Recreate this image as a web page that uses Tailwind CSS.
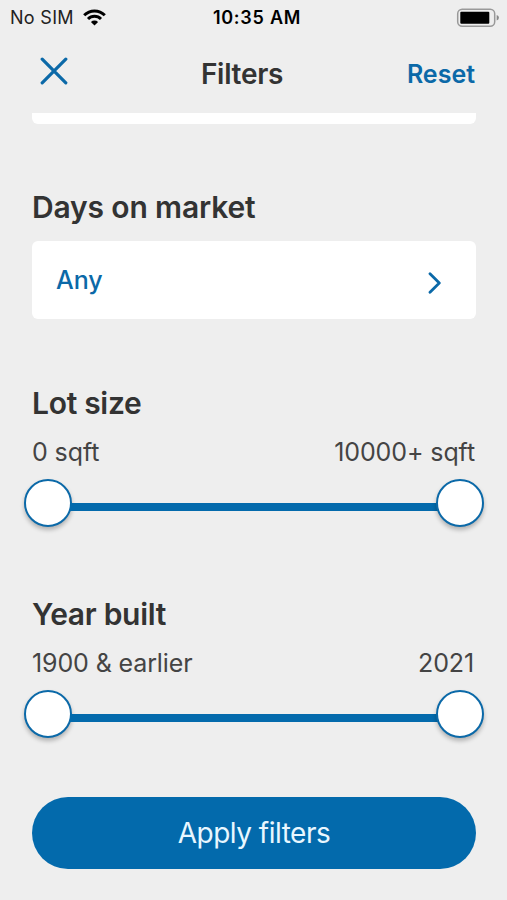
<!DOCTYPE html>
<html lang="en">
<head>
<meta charset="utf-8">
<title>Filters</title>
<script src="https://cdn.jsdelivr.net/npm/@tailwindcss/browser@4"></script>
</head>
<body class="bg-[#eeeeee] font-['Inter',sans-serif] text-[#333333]">
<div class="flex h-[900px] w-[507px] flex-col overflow-hidden">
  <div class="grid h-[34px] grid-cols-3 items-center text-black">
    <div class="flex items-center pl-[10px]">
      <span class="w-[64px] whitespace-nowrap text-[18px] leading-[34px] tracking-[0.3px] text-[#222222]">No SIM</span>
      <svg class="ml-[9px] mb-[1px] h-[17px] w-[23px]" viewBox="0 0 23 17" fill="none" stroke="currentColor" stroke-width="3">
        <path d="M1.2 6.2a14.6 14.6 0 0 1 20.6 0"/>
        <path d="M5 10a9.2 9.2 0 0 1 13 0"/>
        <path d="M11.5 16.6 7.9 13a5.2 5.2 0 0 1 7.2 0z" fill="currentColor" stroke="none"/>
      </svg>
    </div>
    <span class="whitespace-nowrap pl-[7px] text-center text-[18px] font-semibold leading-[35px] tracking-[0.75px]">10:35 AM</span>
    <svg class="mr-[7px] h-[20px] w-[44px] justify-self-end" viewBox="0 0 44 20">
      <rect x="1.7" y="1.2" width="37" height="17" rx="4.5" fill="none" stroke="#999999" stroke-width="1.5"/>
      <rect x="4.3" y="3.8" width="29" height="12" rx="1" fill="#000"/>
      <path d="M40.7 7q2.2.6 2.2 2.7t-2.2 2.7z" fill="#888888"/>
    </svg>
  </div>
  <header class="grid h-[79px] grid-cols-3 items-center pl-[40px] pr-[32px]">
    <svg class="mb-[5px] h-[28px] w-[28px]" viewBox="0 0 28 28" fill="none" stroke="#0b69a8" stroke-width="3.2" stroke-linecap="round"><path d="M2.2 2.2 25.8 25.8M25.8 2.2 2.2 25.8"/></svg>
    <h1 class="-mr-[12px] pr-[43px] text-center text-[28px] font-semibold leading-[40px] tracking-[-0.3px]">Filters</h1>
    <button class="text-right text-[25px] font-semibold leading-[40px] text-[#0b69a8]">Reset</button>
  </header>
  <main class="flex flex-col px-[32px] pr-[31px]">
    <div class="h-[11px] rounded-b-[6px] bg-white"></div>
    <h2 class="mt-[63px] text-[30px] font-semibold leading-[40px] tracking-[-0.15px]">Days on market</h2>
    <div class="mt-[14px] flex h-[78px] items-center justify-between rounded-[6px] bg-white pl-[24px] pr-[34px] text-[#0b69a8]">
      <span class="text-[25px] font-medium leading-[40px]">Any</span>
      <svg class="mt-[6px] h-[22px] w-[14px]" viewBox="0 0 14 22" fill="none" stroke="currentColor" stroke-width="2.8" stroke-linecap="round" stroke-linejoin="round"><path d="M2 1.8 11.3 11 2 20.2"/></svg>
    </div>
    <h2 class="mt-[64px] text-[30px] font-semibold leading-[40px] tracking-[-0.3px]">Lot size</h2>
    <div class="mt-[14px] flex justify-between text-[25px] leading-[30px] tracking-[-0.1px] text-[#444444]"><span>0 sqft</span><span class="pr-[1px]">10000+ sqft</span></div>
    <div class="-mx-[8px] mt-[12px] flex h-[48px] items-center">
      <div class="h-[48px] w-[48px] shrink-0 rounded-full border-2 border-[#0b69a8] bg-white shadow-[0_3px_4px_rgba(0,0,0,0.25)]"></div>
      <div class="-mx-[2px] mt-[7px] h-[8px] grow bg-[#036aac]"></div>
      <div class="h-[48px] w-[48px] shrink-0 rounded-full border-2 border-[#0b69a8] bg-white shadow-[0_3px_4px_rgba(0,0,0,0.25)]"></div>
    </div>
    <h2 class="mt-[67px] text-[30px] font-semibold leading-[40px] tracking-[-0.3px]">Year built</h2>
    <div class="mt-[14px] flex justify-between text-[25px] leading-[30px] tracking-[-0.12px] text-[#444444]"><span>1900 &amp; earlier</span><span class="pr-[2px]">2021</span></div>
    <div class="-mx-[8px] mt-[12px] flex h-[48px] items-center">
      <div class="h-[48px] w-[48px] shrink-0 rounded-full border-2 border-[#0b69a8] bg-white shadow-[0_3px_4px_rgba(0,0,0,0.25)]"></div>
      <div class="-mx-[2px] mt-[7px] h-[8px] grow bg-[#036aac]"></div>
      <div class="h-[48px] w-[48px] shrink-0 rounded-full border-2 border-[#0b69a8] bg-white shadow-[0_3px_4px_rgba(0,0,0,0.25)]"></div>
    </div>
    <button class="mt-[59px] h-[72px] rounded-full bg-[#036aac] text-[28px] leading-[73px] tracking-[-0.5px] text-[#e9f7ff]">Apply filters</button>
  </main>
</div>
</body>
</html>
